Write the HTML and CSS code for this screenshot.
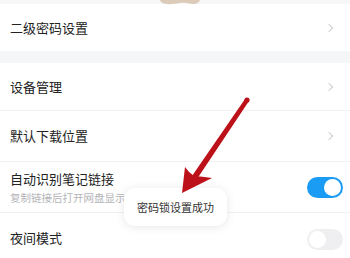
FILE: index.html
```html
<!DOCTYPE html>
<html lang="zh">
<head>
<meta charset="utf-8">
<link rel="stylesheet" href="styles.css">
</head>
<body>
<div class="page">
  <div class="top-strip">
    <svg class="blob" width="40" height="5" viewBox="0 0 40 5"><path d="M0 0 H40 C39 3 36 4.5 32 4 C28 3.5 25 2.5 20 3 C15 3.5 12 4.5 8 4.2 C4 4 1 3 0 0 Z" fill="#dccbb8"/></svg>
  </div>
  <div class="group">
    <div class="row first">
      <span class="title">二级密码设置</span>
      <span class="chev"></span>
    </div>
  </div>
  <div class="gap"></div>
  <div class="group">
    <div class="row first">
      <span class="title">设备管理</span>
      <span class="chev"></span>
    </div>
    <div class="row">
      <span class="title">默认下载位置</span>
      <span class="chev"></span>
    </div>
    <div class="row">
      <div class="texts">
        <span class="title">自动识别笔记链接</span>
        <span class="sub">复制链接后打开网盘显示</span>
      </div>
      <span class="switch on"><span class="knob"></span></span>
    </div>
    <div class="row">
      <span class="title">夜间模式</span>
      <span class="switch off"><span class="knob"></span></span>
    </div>
  </div>

  <div class="toast">密码锁设置成功</div>

  <svg class="arrow" width="350" height="258" viewBox="0 0 350 258">
    <path d="M249 101 L245 99 L192 176 L197 179 Z" fill="#bd1119"/>
    <circle cx="247" cy="100" r="2.6" fill="#bd1119"/>
    <path d="M182 193 L185 167 Q189 173 194 176 Q202 176.5 212 178 Z" fill="#bd1119"/>
  </svg>
</div>
</body>
</html>
```

FILE: styles.css
```css
* { box-sizing: border-box; margin: 0; padding: 0; }
html, body { width: 350px; height: 258px; overflow: hidden; background: #fff; }
body {
  font-family: "Noto Sans CJK SC", "Noto Sans", sans-serif;
  color: #222;
}
.page { position: relative; width: 350px; height: 258px; overflow: hidden; }
.top-strip {
  height: 4px;
  background: #f7f7f8;
  position: relative;
}
.blob { position: absolute; left: 160px; top: 0; }
.group { background: #fff; }
.row {
  height: 51px;
  display: flex;
  align-items: center;
  justify-content: space-between;
  padding: 0 8px 0 10px;
  border-top: 1px solid #f1f1f3;
}
.row.first { border-top: none; height: 47px; }
.group:nth-of-type(3) .row.first { height: 51px; padding-top: 3px; }
.title { font-size: 13px; line-height: 18px; }
.texts { display: flex; flex-direction: column; gap: 2px; padding-top: 1px; }
.sub { font-size: 10.5px; line-height: 15px; color: #b4b4b8; }
.chev {
  width: 6px; height: 6px;
  border-top: 1px solid #cfcfd2;
  border-right: 1px solid #cfcfd2;
  transform: rotate(45deg);
  margin-right: 10px;
}
.gap { height: 12px; background: #f5f6f8; }
.switch {
  width: 36px; height: 21px;
  border-radius: 11px;
  display: flex;
  align-items: center;
  padding: 0 2px;
  margin-right: -1px;
}
.switch.on { background: #1a9bf4; justify-content: flex-end; }
.switch.off { background: #efeff1; justify-content: flex-start; margin-top: 2px; }
.knob {
  width: 17px; height: 17px; border-radius: 50%;
  background: #fff;
}
.toast {
  position: absolute;
  left: 124px; top: 188px;
  width: 103px; height: 38px;
  background: #fff;
  border-radius: 11px;
  box-shadow: 0 1px 10px rgba(0,0,0,0.10);
  font-size: 11px;
  color: #333;
  display: flex; align-items: center; justify-content: center;
}
.arrow { position: absolute; left: 0; top: 0; }
```
